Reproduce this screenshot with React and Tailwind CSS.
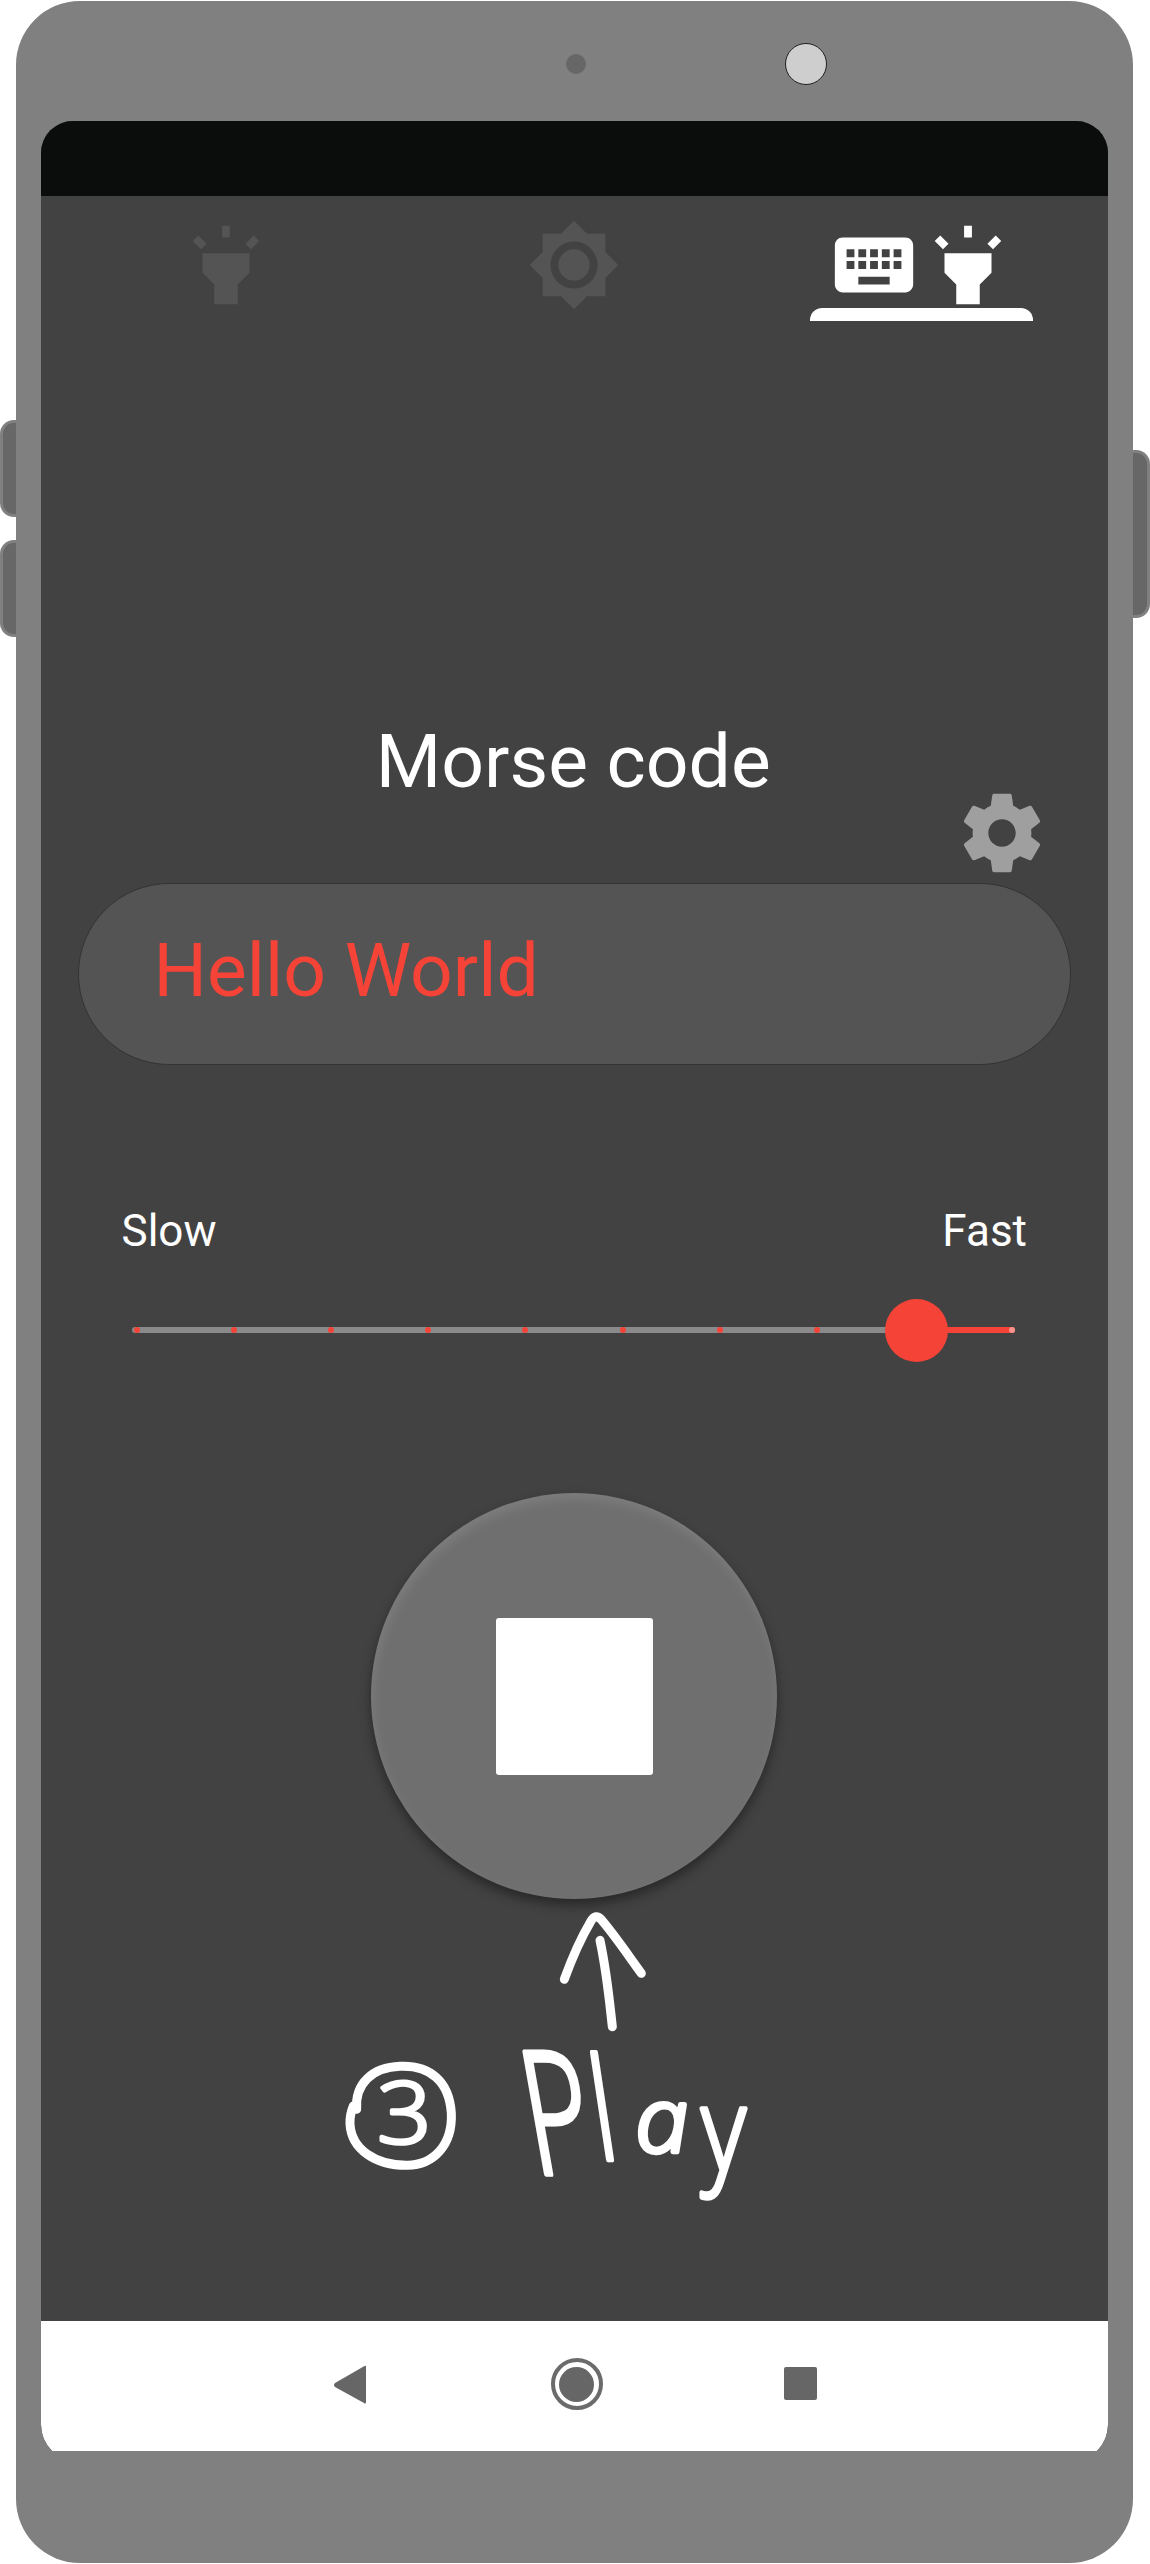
import React from "react";
import { MdBrightness7, MdHighlight, MdKeyboard } from "react-icons/md";

const TICKS = [0, 1, 2, 3, 4, 5, 6, 7];

function Gear() {
  return (
    <svg viewBox="0 0 24 24" className="size-[94px] fill-[#9f9f9f]">
      <path d="M19.43 12.98c.04-.32.07-.64.07-.98s-.03-.66-.07-.98l2.11-1.65c.19-.15.24-.42.12-.64l-2-3.46c-.12-.22-.39-.3-.61-.22l-2.49 1c-.52-.4-1.08-.73-1.69-.98l-.38-2.65C14.46 2.18 14.25 2 14 2h-4c-.25 0-.46.18-.49.42l-.38 2.65c-.61.25-1.17.59-1.69.98l-2.49-1c-.23-.09-.49 0-.61.22l-2 3.46c-.13.22-.07.49.12.64l2.11 1.65c-.04.32-.07.65-.07.98s.03.66.07.98l-2.11 1.65c-.19.15-.24.42-.12.64l2 3.46c.12.22.39.3.61.22l2.49-1c.52.4 1.08.73 1.69.98l.38 2.65c.03.24.24.42.49.42h4c.25 0 .46-.18.49-.42l.38-2.65c.61-.25 1.17-.59 1.69-.98l2.49 1c.23.09.49 0 .61-.22l2-3.46c.12-.22.07-.49-.12-.64l-2.11-1.65zM12 15.5c-1.93 0-3.5-1.57-3.5-3.5s1.57-3.5 3.5-3.5 3.5 1.57 3.5 3.5-1.57 3.5-3.5 3.5z" />
    </svg>
  );
}

function Tabs() {
  return (
    <div className="flex h-[125px] pl-3 pr-[13px] pt-[22px]">
      <div className="flex flex-1 justify-center text-[#545454]">
        <MdHighlight className="size-[94px]" />
      </div>
      <div className="flex flex-1 justify-center text-[#545454]">
        <MdBrightness7 className="size-[94px]" />
      </div>
      <div className="flex flex-1 flex-col items-center text-white">
        <div className="flex">
          <MdKeyboard className="size-[94px]" />
          <MdHighlight className="size-[94px]" />
        </div>
        <div className="-mt-1 h-[13px] w-[223px] shrink-0 rounded-t-[12px] bg-white" />
      </div>
    </div>
  );
}

function Slider() {
  return (
    <div className="relative ml-[91px] mr-[93.5px] mt-[40px] flex h-16 items-center">
      <div className="flex h-1.5 flex-1 items-center justify-between rounded-full bg-[#8a8a8a] pl-[2px]">
        {TICKS.map((t) => (
          <span key={t} className="size-1.5 rounded-full bg-[#f54337]" />
        ))}
        <span className="size-1.5" />
        <span className="size-1.5 rounded-full" />
      </div>
      <div className="absolute right-0 flex h-1.5 w-[100px] justify-end rounded-full bg-[#f54337]">
        <span className="size-1.5 rounded-full bg-[#f9938c]" />
      </div>
      <div className="absolute left-[753px] size-[63px] rounded-full bg-[#f54337]" />
    </div>
  );
}

/* Handwritten step note: a pen-drawn arrow and ring with the step label. */
function StepNote() {
  return (
    <div className="ml-[279.5px] mt-[-9px] h-[340px] w-[460px]">
      <svg
        viewBox="0 0 1380 1020"
        className="size-full fill-none stroke-white"
        strokeWidth="27"
        strokeLinecap="round"
        strokeLinejoin="round"
      >
        <path d="M733 268C755 207 780 149 813 93Q827 70 843 88C885 137 921 191 964 250" />
        <path d="M840 151C861 250 868 330 877 410" />
        <path d="M110 658C104 580 158 532 240 529C330 525 388 574 394 670C398 765 341 825 262 826C167 827 94 778 90 702Q89 674 100 648L108 658" />
        <g className="fill-white font-['Open_Sans',sans-serif] font-light" strokeWidth="11">
          <text transform="translate(172 758) scale(1.13 1)" fontSize="252">3</text>
          <text transform="translate(644 852) skewX(10) scale(1 1.55)" fontSize="330">P</text>
          <text transform="translate(836 811) skewX(8.5) scale(1 1.42)" fontSize="300" strokeWidth="9">l</text>
          <text transform="translate(950 786) skewX(4) scale(1.08 1)" fontSize="270" strokeWidth="14" className="italic">a</text>
          <text transform="translate(1144 843) scale(.84 1)" fontSize="346" strokeWidth="13">y</text>
        </g>
      </svg>
    </div>
  );
}

function NavBar() {
  return (
    <div className="flex h-[140px] shrink-0 items-start rounded-b-[36px] bg-white pt-[37px]">
      <svg viewBox="0 0 34 40" className="ml-[292px] mt-[6.5px] h-10 w-[34px] fill-[#666]">
        <path d="M31.5 1Q33 0 33 2V37Q33 39.5 31 38L2 22Q0 20 2 18Z" />
      </svg>
      <div className="ml-[184px] flex size-[52px] items-center justify-center rounded-full border-[4px] border-[#6b6b6b]">
        <div className="size-[35px] rounded-full bg-[#666]" />
      </div>
      <div className="ml-[181px] mt-[9px] h-[33px] w-[33px] rounded-[2px] bg-[#666]" />
    </div>
  );
}

export default function App() {
  return (
    <div className="flex h-[2564px] w-[1150px] overflow-hidden bg-white font-['Roboto',sans-serif] text-white">
      <div className="flex w-4 shrink-0 flex-col gap-[23px] pt-[420px]">
        <div className="h-[97px] rounded-l-[14px] border-[3px] border-r-0 border-[#808080] bg-[#676767]" />
        <div className="h-[97px] rounded-l-[14px] border-[3px] border-r-0 border-[#808080] bg-[#676767]" />
      </div>

      <div className="mt-[0.5px] flex h-[2562.5px] w-[1116.5px] shrink-0 flex-col rounded-[64px] bg-[#808080] px-[24.5px]">
        <div className="flex h-[120.5px] shrink-0 items-center pt-[7px]">
          <div className="ml-[525px] size-5 rounded-full bg-[#676767]" />
          <div className="ml-[199.5px] size-[42px] rounded-full border border-[#231f1f] bg-[#cecece]" />
        </div>

        <div className="h-[2330px] shrink-0 overflow-hidden">
          <div className="flex flex-col overflow-hidden rounded-b-[36px] rounded-t-[32px] bg-[#424242]">
            <div className="h-[75px] shrink-0 bg-[#0a0d0b]" />
            <div className="flex h-[2125px] shrink-0 flex-col">
              <Tabs />
              <h1 className="mt-[396px] pr-0.5 text-center text-[75px] leading-[88px]">Morse code</h1>
              <div className="-mt-[19px] flex justify-end pr-[59px]">
                <Gear />
              </div>
              <div className="mx-[37px] mt-[3px] flex h-[182px] items-center rounded-full border border-[#333] bg-[#545454] pb-[7px] pl-[75px] text-[75px] text-[#f54337]">
                Hello World
              </div>
              <div className="mt-[139px] flex justify-between px-[81px] text-[44px] leading-[54px]">
                <span>Slow</span>
                <span>Fast</span>
              </div>
              <Slider />
              <button className="mx-auto mt-[131px] flex size-[406px] shrink-0 items-center justify-center rounded-full bg-[#6f6f6f] shadow-[0_6px_12px_rgba(0,0,0,0.4),inset_2px_6px_12px_rgba(255,255,255,0.1)]">
                <span className="size-[157px] rounded-[3px] bg-white" />
              </button>
              <StepNote />
            </div>
            <NavBar />
          </div>
        </div>
      </div>

      <div className="flex-1 pt-[450px]">
        <div className="h-[168px] rounded-r-[14px] border-[3px] border-l-0 border-[#808080] bg-[#676767]" />
      </div>
    </div>
  );
}
